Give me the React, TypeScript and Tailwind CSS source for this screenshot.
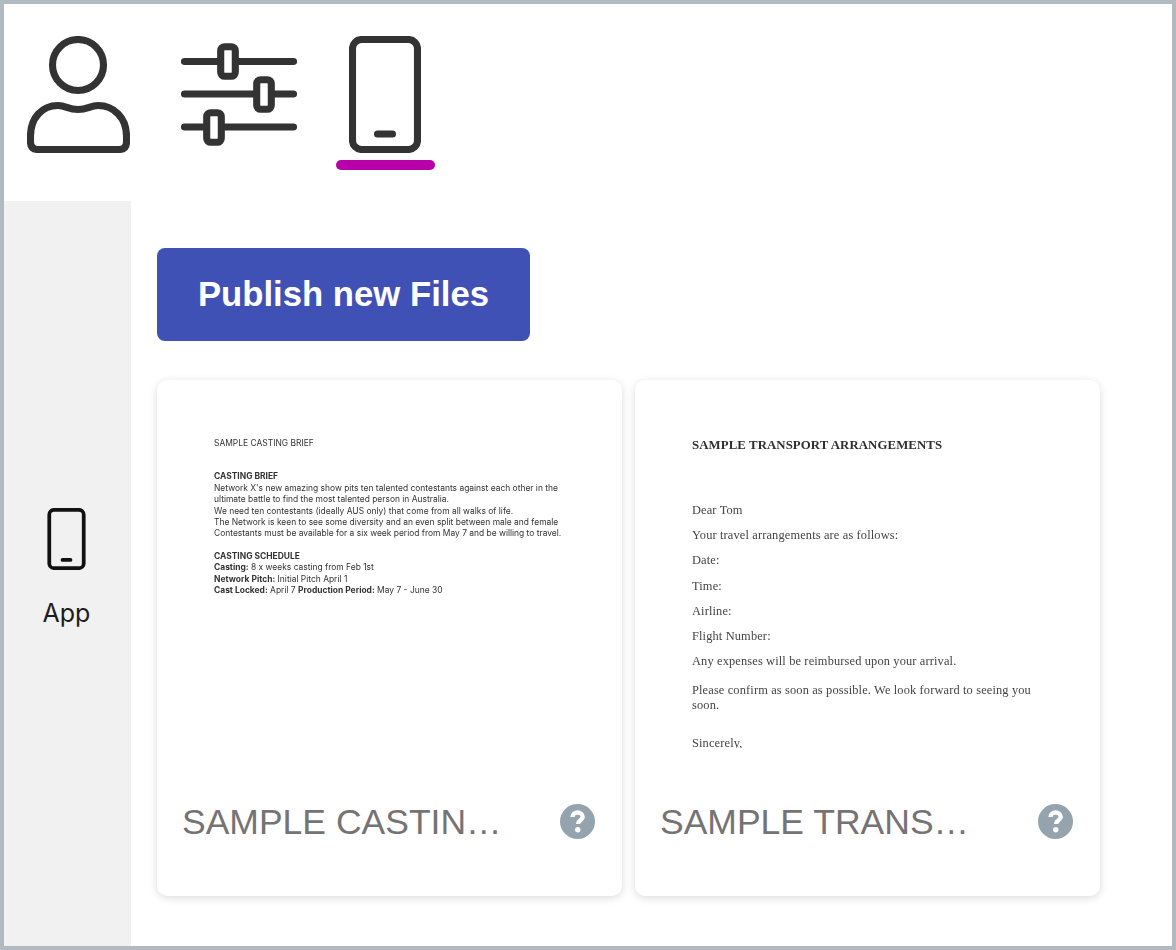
import React from 'react';

const iconStroke = '7.1';

function PersonIcon() {
  return (
    <svg viewBox="27 36 103 117" className="w-[103px] h-[117px]" fill="none" stroke="#333333" strokeWidth={iconStroke}>
      <circle cx="78" cy="65" r="25.5" />
      <path d="M38 149.5H119Q126.5 149.5 126.5 142V136C126.5 118 114 105.5 98 105.5C90 105.5 88 109.5 78 109.5C68 109.5 66 105.5 58 105.5C42 105.5 30.5 118 30.5 136V142Q30.5 149.5 38 149.5Z" />
    </svg>
  );
}

function SlidersIcon() {
  return (
    <svg viewBox="181 36 116 117" className="w-[116px] h-[117px]" fill="none" stroke="#333333" strokeWidth={iconStroke} strokeLinecap="round">
      <path d="M184.5 61.5H293.5M184.5 94H293.5M184.5 127H293.5" />
      <rect x="220.7" y="46.7" width="14.6" height="29.6" rx="4" fill="#ffffff" />
      <rect x="256.7" y="79.7" width="14.6" height="29.6" rx="4" fill="#ffffff" />
      <rect x="206.7" y="112.7" width="14.6" height="29.6" rx="4" fill="#ffffff" />
    </svg>
  );
}

function PhoneIcon({ className }: { className: string }) {
  return (
    <svg viewBox="0 0 72 117" className={className} fill="none" stroke="currentColor" strokeWidth={iconStroke} strokeLinecap="round">
      <rect x="3.5" y="3.5" width="65" height="110" rx="9" />
      <path d="M28.5 98H43.5" />
    </svg>
  );
}

function HelpIcon() {
  return (
    <svg viewBox="0 0 35 35" className="w-[35px] h-[35px] shrink-0 -translate-y-px">
      <circle cx="17.5" cy="17.5" r="17.5" fill="#94a3ad" />
      <path d="M12.5 13C12.5 10 15 8.5 17.6 8.5C20.5 8.5 22.7 10.5 22.7 13C22.7 16 18 16.5 18 20" fill="none" stroke="#ffffff" strokeWidth="4.4" />
      <circle cx="17.8" cy="25.7" r="2.7" fill="#ffffff" />
    </svg>
  );
}

function CastingPreview() {
  return (
    <div className="pl-[57px] pt-[58px] text-[8.45px] leading-[11.4px] text-[#333333] whitespace-nowrap blur-[0.25px] font-['Inter',sans-serif]">
      <p>SAMPLE CASTING BRIEF</p>
      <p className="mt-[22px] font-bold">CASTING BRIEF</p>
      <p>Network X's new amazing show pits ten talented contestants against each other in the</p>
      <p>ultimate battle to find the most talented person in Australia.</p>
      <p>We need ten contestants (ideally AUS only) that come from all walks of life.</p>
      <p>The Network is keen to see some diversity and an even split between male and female</p>
      <p>Contestants must be available for a six week period from May 7 and be willing to travel.</p>
      <p className="mt-[11px] font-bold">CASTING SCHEDULE</p>
      <p><b>Casting:</b> 8 x weeks casting from Feb 1st</p>
      <p><b>Network Pitch:</b> Initial Pitch April 1</p>
      <p><b>Cast Locked:</b> April 7 <b>Production Period:</b> May 7 - June 30</p>
    </div>
  );
}

function TransportPreview() {
  const lines = ['Your travel arrangements are as follows:', 'Date:', 'Time:', 'Airline:', 'Flight Number:', 'Any expenses will be reimbursed upon your arrival.'];
  return (
    <div className="pl-[57px] pt-[58px] text-[12.4px] leading-[15px] tracking-[0.14px] text-[#444444] whitespace-nowrap blur-[0.25px] font-['Liberation_Serif',serif]">
      <p className="font-bold text-[12.8px] text-[#2f2f2f] tracking-[0.1px]">SAMPLE TRANSPORT ARRANGEMENTS</p>
      <p className="mt-[50px]">Dear Tom</p>
      {lines.map(line => (
        <p key={line} className="mt-[10.2px]">{line}</p>
      ))}
      <p className="mt-[14px]">Please confirm as soon as possible. We look forward to seeing you</p>
      <p>soon.</p>
      <p className="mt-[23px]">Sincerely,</p>
    </div>
  );
}

function FileCard({ title, children }: { title: string; children: React.ReactNode }) {
  return (
    <div className="w-[465px] h-[516px] flex flex-col bg-white rounded-[10px] shadow-[0_2px_8px_rgba(0,0,0,0.14)]">
      <div className="h-[368px] overflow-hidden">{children}</div>
      <div className="flex-1 flex items-center justify-between pl-[25px] pr-[27px]">
        <span className="w-[320px] pt-[2px] truncate text-[35.5px] text-[#757373] antialiased">{title}</span>
        <HelpIcon />
      </div>
    </div>
  );
}

export default function App() {
  return (
    <div className="w-[1176px] h-[950px] border-4 border-[#b1bac1] bg-white flex flex-col font-['Liberation_Sans',sans-serif]">
      <header className="h-[197px] flex pl-[23px] pt-[32px]">
        <PersonIcon />
        <div className="ml-[51px]">
          <SlidersIcon />
        </div>
        <div className="ml-[39px] w-[99px] flex flex-col">
          <div className="ml-[13px]">
            <PhoneIcon className="w-[72px] h-[117px] text-[#333333]" />
          </div>
          <div className="mt-[7px] w-full h-[10px] rounded-full bg-[#b800aa]" />
        </div>
      </header>
      <div className="flex-1 flex">
        <aside className="w-[127px] bg-[#f1f1f1] flex flex-col items-center justify-center pb-[10px] pr-[2px]">
          <PhoneIcon className="w-[39px] h-[62px] text-[#111111]" />
          <span className="mt-[26px] text-[25px] leading-[34px] text-[#1c1c1c] antialiased font-['Inter',sans-serif]">App</span>
        </aside>
        <main className="flex-1 pl-[26px] pt-[47px]">
          <button className="w-[373px] h-[93px] rounded-lg bg-[#3f51b5] text-white text-[34.7px] font-bold antialiased">
            Publish new Files
          </button>
          <div className="mt-[39px] flex gap-[13px]">
            <FileCard title="SAMPLE CASTING BRIEF">
              <CastingPreview />
            </FileCard>
            <FileCard title="SAMPLE TRANSPORT ARRANGEMENTS">
              <TransportPreview />
            </FileCard>
          </div>
        </main>
      </div>
    </div>
  );
}
